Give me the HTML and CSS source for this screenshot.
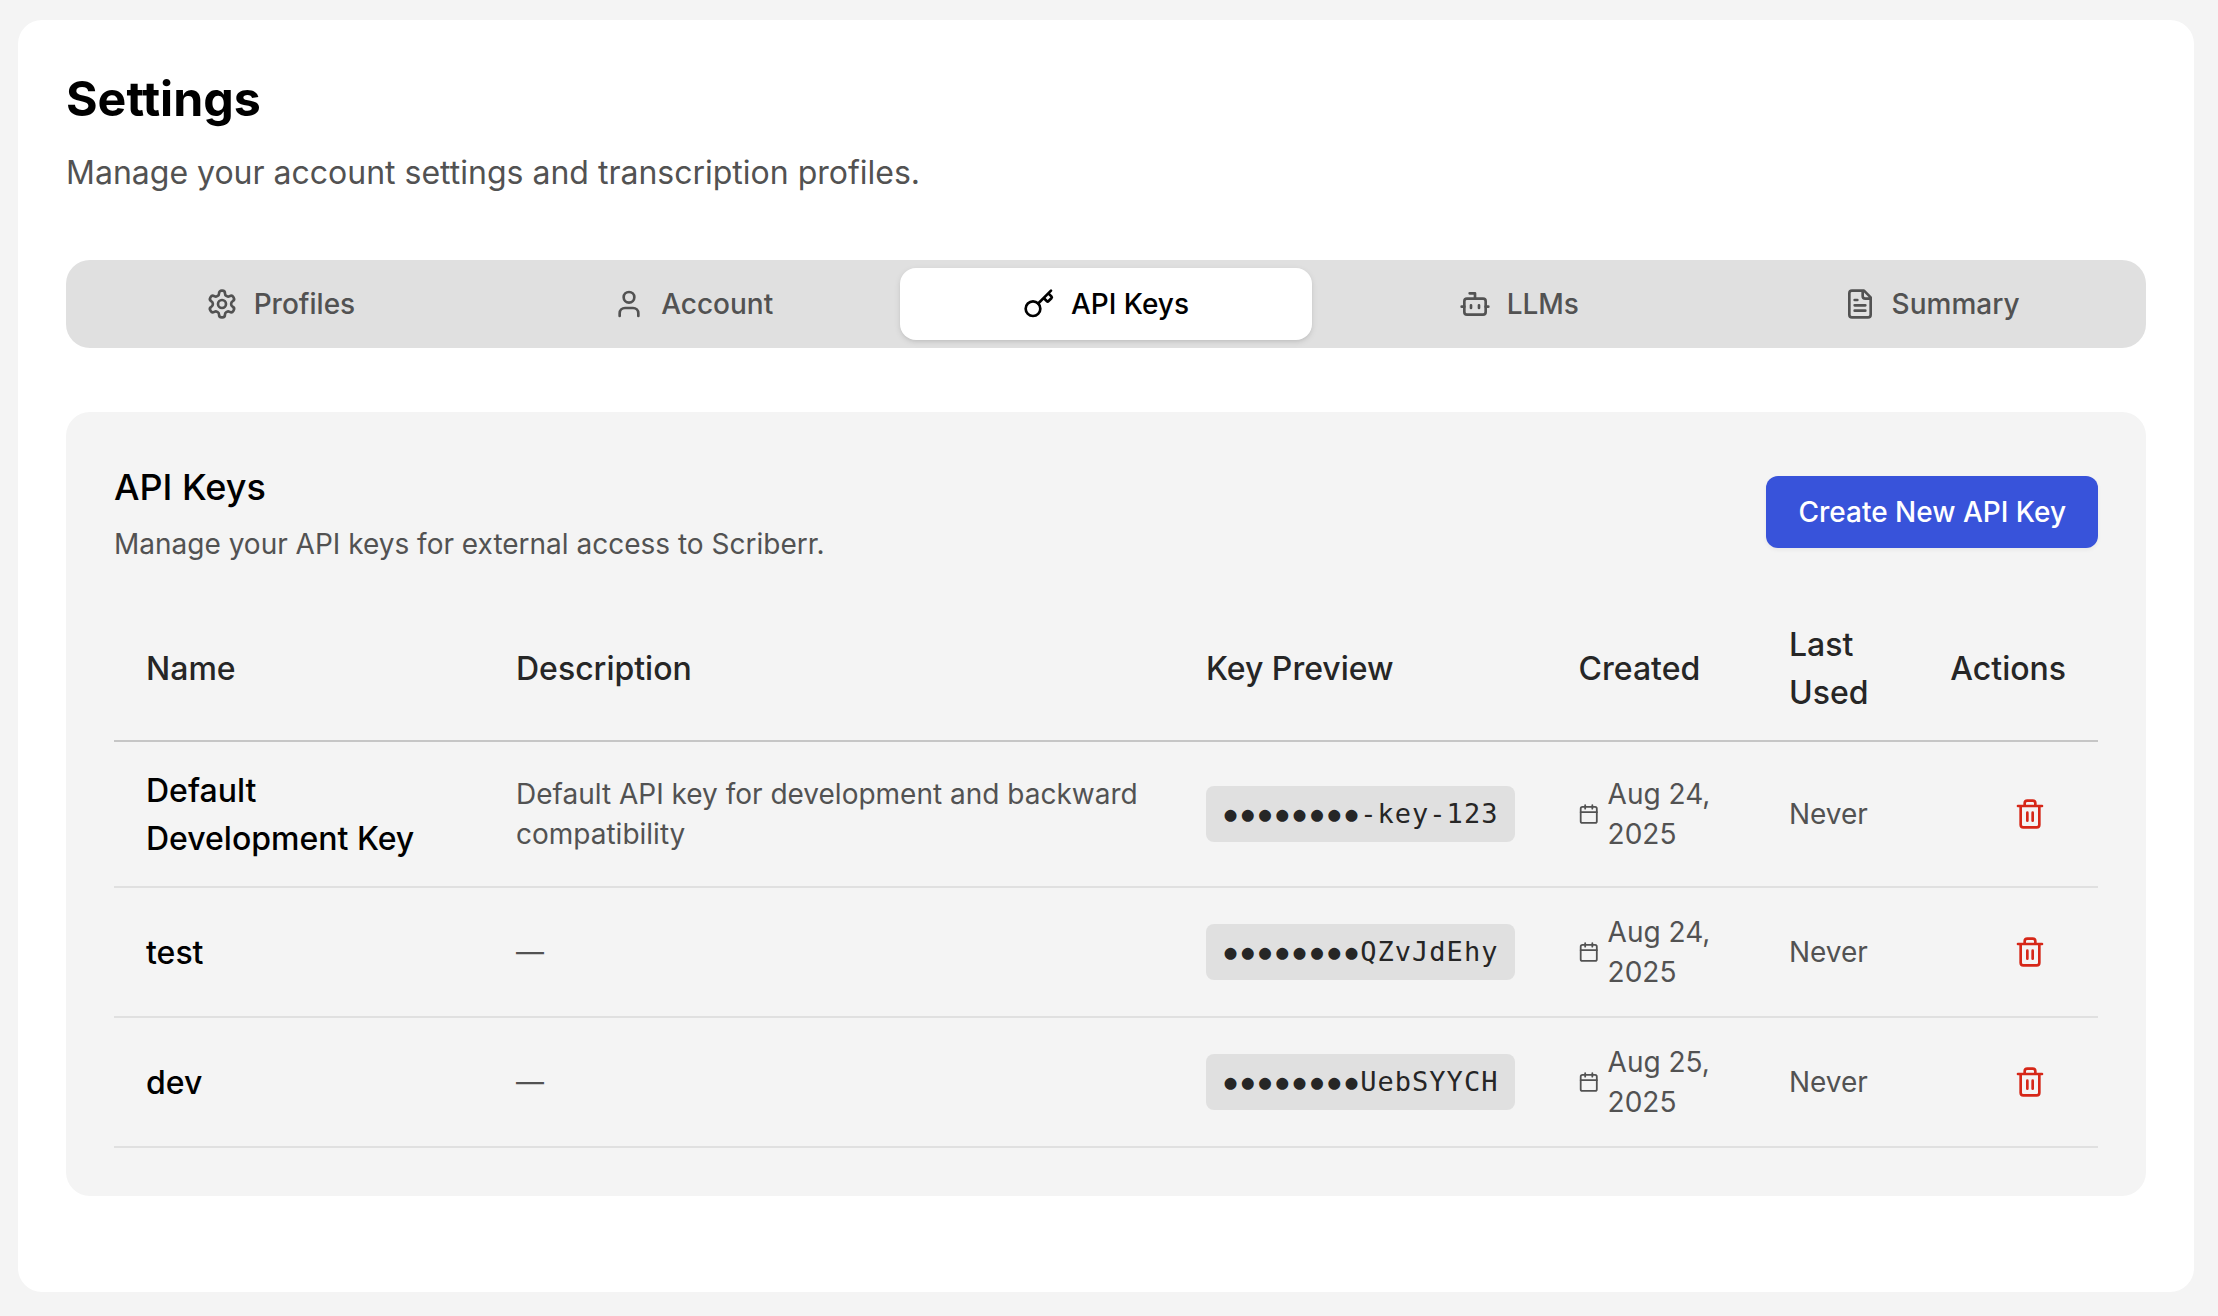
FILE: index.html
```html
<!DOCTYPE html>
<html lang="en">
<head>
<meta charset="utf-8">
<title>Settings</title>
<link rel="stylesheet" href="styles.css">
</head>
<body>
<svg class="sprite" aria-hidden="true">
  <symbol id="trash" viewBox="0 0 24 24"><path d="M3 6h18M19 6v14a2 2 0 0 1-2 2H7a2 2 0 0 1-2-2V6M8 6V4a2 2 0 0 1 2-2h4a2 2 0 0 1 2 2v2M10 11v6M14 11v6"/></symbol>
  <symbol id="calendar" viewBox="0 0 24 24"><path d="M8 2v4M16 2v4M3 10h18"/><rect width="18" height="18" x="3" y="4" rx="2"/></symbol>
</svg>
<main class="page">
  <h1 class="page-title">Settings</h1>
  <p class="page-subtitle">Manage your account settings and transcription profiles.</p>

  <nav class="tabs">
    <a class="tab"><svg class="icon" viewBox="0 0 24 24"><path d="M12.22 2h-.44a2 2 0 0 0-2 2v.18a2 2 0 0 1-1 1.73l-.43.25a2 2 0 0 1-2 0l-.15-.08a2 2 0 0 0-2.73.73l-.22.38a2 2 0 0 0 .73 2.73l.15.1a2 2 0 0 1 1 1.72v.51a2 2 0 0 1-1 1.74l-.15.09a2 2 0 0 0-.73 2.73l.22.38a2 2 0 0 0 2.73.73l.15-.08a2 2 0 0 1 2 0l.43.25a2 2 0 0 1 1 1.73V20a2 2 0 0 0 2 2h.44a2 2 0 0 0 2-2v-.18a2 2 0 0 1 1-1.73l.43-.25a2 2 0 0 1 2 0l.15.08a2 2 0 0 0 2.73-.73l.22-.39a2 2 0 0 0-.73-2.73l-.15-.08a2 2 0 0 1-1-1.74v-.5a2 2 0 0 1 1-1.74l.15-.09a2 2 0 0 0 .73-2.73l-.22-.38a2 2 0 0 0-2.73-.73l-.15.08a2 2 0 0 1-2 0l-.43-.25a2 2 0 0 1-1-1.73V4a2 2 0 0 0-2-2z"/><circle cx="12" cy="12" r="3"/></svg>Profiles</a>
    <a class="tab"><svg class="icon" viewBox="0 0 24 24"><path d="M19 21v-2a4 4 0 0 0-4-4H9a4 4 0 0 0-4 4v2"/><circle cx="12" cy="7" r="4"/></svg>Account</a>
    <a class="tab tab-active"><svg class="icon" viewBox="0 0 24 24"><path d="m15.5 7.5 2.3 2.3a1 1 0 0 0 1.4 0l2.1-2.1a1 1 0 0 0 0-1.4L19 4M21 2l-9.6 9.6"/><circle cx="7.5" cy="15.5" r="5.5"/></svg>API Keys</a>
    <a class="tab"><svg class="icon" viewBox="0 0 24 24"><path d="M12 8V4H8M2 14h2M20 14h2M15 13v2M9 13v2"/><rect width="16" height="12" x="4" y="8" rx="2"/></svg>LLMs</a>
    <a class="tab"><svg class="icon" viewBox="0 0 24 24"><path d="M15 2H6a2 2 0 0 0-2 2v16a2 2 0 0 0 2 2h12a2 2 0 0 0 2-2V7ZM14 2v4a2 2 0 0 0 2 2h4M10 9H8M16 13H8M16 17H8"/></svg>Summary</a>
  </nav>

  <section class="card">
    <header class="card-header">
      <div>
        <h2 class="card-title">API Keys</h2>
        <p class="card-subtitle">Manage your API keys for external access to Scriberr.</p>
      </div>
      <button class="button">Create New API Key</button>
    </header>
    <table class="keys">
      <colgroup><col class="col-name"><col class="col-desc"><col class="col-key"><col class="col-created"><col class="col-used"><col></colgroup>
      <thead>
        <tr><th>Name</th><th>Description</th><th>Key Preview</th><th>Created</th><th>Last Used</th><th class="actions">Actions</th></tr>
      </thead>
      <tbody>
        <tr>
          <td class="name">Default Development Key</td>
          <td>Default API key for development and backward compatibility</td>
          <td><code class="chip"><span class="dots">●●●●●●●●</span>-key-123</code></td>
          <td><div class="date"><svg class="icon icon-small"><use href="#calendar"/></svg><span>Aug 24, 2025</span></div></td>
          <td>Never</td>
          <td class="actions"><button class="delete" aria-label="Delete"><svg class="icon"><use href="#trash"/></svg></button></td>
        </tr>
        <tr>
          <td class="name">test</td>
          <td>—</td>
          <td><code class="chip"><span class="dots">●●●●●●●●</span>QZvJdEhy</code></td>
          <td><div class="date"><svg class="icon icon-small"><use href="#calendar"/></svg><span>Aug 24, 2025</span></div></td>
          <td>Never</td>
          <td class="actions"><button class="delete" aria-label="Delete"><svg class="icon"><use href="#trash"/></svg></button></td>
        </tr>
        <tr>
          <td class="name">dev</td>
          <td>—</td>
          <td><code class="chip"><span class="dots">●●●●●●●●</span>UebSYYCH</code></td>
          <td><div class="date"><svg class="icon icon-small"><use href="#calendar"/></svg><span>Aug 25, 2025</span></div></td>
          <td>Never</td>
          <td class="actions"><button class="delete" aria-label="Delete"><svg class="icon"><use href="#trash"/></svg></button></td>
        </tr>
      </tbody>
    </table>
  </section>
</main>
</body>
</html>
```

FILE: styles.css
```css
* { box-sizing: border-box; margin: 0; padding: 0; }
body {
  min-height: 1316px;
  padding: 20px 24px 24px 18px;
  background: #f4f4f4;
  color: #000;
  font-family: Inter, sans-serif;
  font-size: 32px;
  line-height: 48px;
}
.sprite { display: none; }
.page {
  height: 1272px;
  padding: 48px;
  border-radius: 24px;
  background: #fff;
}
.page-title { font-size: 48.3px; font-weight: 700; line-height: 62px; }
.page-subtitle { margin-top: 19px; color: #525252; }

.icon {
  width: 32px;
  height: 32px;
  flex: none;
  fill: none;
  stroke: currentColor;
  stroke-width: 2;
  stroke-linecap: round;
  stroke-linejoin: round;
}
.tabs {
  display: grid;
  grid-template-columns: repeat(5, 1fr);
  height: 88px;
  margin-top: 63px;
  padding: 8px;
  border-radius: 24px;
  background: #e0e0e0;
}
.tab {
  display: flex;
  align-items: center;
  justify-content: center;
  gap: 16px;
  border-radius: 16px;
  color: #525252;
  font-size: 28px;
  font-weight: 500;
  line-height: 40px;
}
.tab-active {
  background: #fff;
  color: #000;
  box-shadow: 0 2px 6px rgba(0, 0, 0, .1), 0 2px 4px -2px rgba(0, 0, 0, .1);
}

.card {
  height: 784px;
  margin-top: 64px;
  padding: 48px;
  border-radius: 24px;
  background: #f4f4f4;
}
.card-header {
  display: flex;
  align-items: center;
  justify-content: space-between;
}
.card-title { font-size: 36px; font-weight: 500; line-height: 54px; }
.card-subtitle { margin-top: 10px; color: #525252; font-size: 28px; line-height: 40px; }
.button {
  height: 72px;
  padding: 0 32px;
  border: 0;
  border-radius: 12px;
  background: #3853da;
  color: #fff;
  font: 500 28px/40px Inter, sans-serif;
  box-shadow: 0 2px 4px rgba(0, 0, 0, .05);
}

.keys {
  width: 100%;
  margin-top: 48px;
  border-collapse: separate;
  border-spacing: 0;
  table-layout: fixed;
  text-align: left;
}
.col-name { width: 370px; }
.col-desc { width: 690px; }
.col-key { width: 372.6px; }
.col-created { width: 210.4px; }
.col-used { width: 161px; }
.keys th {
  height: 130px;
  padding: 0 32px 14px;
  border-bottom: 2px solid #c6c6c6;
  color: #262626;
  font-weight: 500;
}
.keys td {
  height: 130px;
  padding: 24px 32px;
  border-bottom: 2px solid #e0e0e0;
  color: #525252;
  font-size: 28px;
  line-height: 40px;
}
.keys .name {
  padding: 25px 32px 23px;
  color: #000;
  font-size: 32px;
  font-weight: 500;
  line-height: 48px;
}
.keys .actions { text-align: right; }
.chip {
  display: flex;
  align-items: center;
  width: 309px;
  height: 56px;
  padding: 0 16px;
  border-radius: 8px;
  background: #e0e0e0;
  color: #262626;
  font: 27px/40px "DejaVu Sans Mono", monospace;
  letter-spacing: 1.03px;
}
.dots {
  width: 138.2px;
  flex: none;
  padding-left: 2.5px;
  font-size: 20px;
  letter-spacing: 5.24px;
  white-space: nowrap;
}
.date { display: flex; align-items: center; gap: 8px; margin-left: -.5px; }
.icon-small { width: 21.5px; height: 24px; }
.delete {
  display: inline-flex;
  align-items: center;
  justify-content: center;
  width: 72px;
  height: 64px;
  border: 0;
  background: none;
  color: #d62718;
  vertical-align: middle;
}
```
